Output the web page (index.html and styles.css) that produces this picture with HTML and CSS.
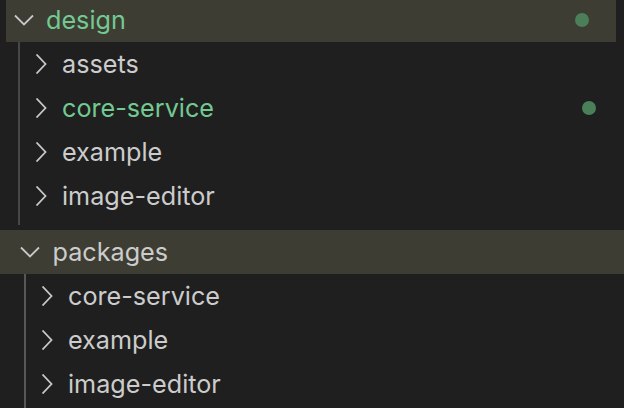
FILE: index.html
```html
<!DOCTYPE html>
<html>
<head>
<meta charset="utf-8">
<link rel="stylesheet" href="styles.css">
</head>
<body>
<div class="tree">
  <div class="folder first">
    <div class="row top selected">
      <svg class="chev" viewBox="0 0 20 20"><path d="M1 5.5 L10 14.5 L19 5.5"/></svg>
      <span class="label green">design</span>
      <span class="dot"></span>
    </div>
    <div class="children guide1">
      <div class="row child">
        <svg class="chev" viewBox="0 0 20 20"><path d="M5.5 0.5 L14.5 10 L5.5 19.5"/></svg>
        <span class="label">assets</span>
      </div>
      <div class="row child">
        <svg class="chev" viewBox="0 0 20 20"><path d="M5.5 0.5 L14.5 10 L5.5 19.5"/></svg>
        <span class="label green">core-service</span>
        <span class="dot"></span>
      </div>
      <div class="row child">
        <svg class="chev" viewBox="0 0 20 20"><path d="M5.5 0.5 L14.5 10 L5.5 19.5"/></svg>
        <span class="label">example</span>
      </div>
      <div class="row child">
        <svg class="chev" viewBox="0 0 20 20"><path d="M5.5 0.5 L14.5 10 L5.5 19.5"/></svg>
        <span class="label">image-editor</span>
      </div>
    </div>
  </div>
  <div class="folder second">
    <div class="row pk selected">
      <svg class="chev" viewBox="0 0 20 20"><path d="M1 5.5 L10 14.5 L19 5.5"/></svg>
      <span class="label">packages</span>
    </div>
    <div class="children guide2">
      <div class="row child">
        <svg class="chev" viewBox="0 0 20 20"><path d="M5.5 0.5 L14.5 10 L5.5 19.5"/></svg>
        <span class="label">core-service</span>
      </div>
      <div class="row child">
        <svg class="chev" viewBox="0 0 20 20"><path d="M5.5 0.5 L14.5 10 L5.5 19.5"/></svg>
        <span class="label">example</span>
      </div>
      <div class="row child">
        <svg class="chev" viewBox="0 0 20 20"><path d="M5.5 0.5 L14.5 10 L5.5 19.5"/></svg>
        <span class="label">image-editor</span>
      </div>
    </div>
  </div>
</div>
</body>
</html>
```
FILE: styles.css
```css
html, body {
  margin: 0;
  padding: 0;
  background: #1f1f1f;
  width: 624px;
  height: 408px;
  overflow: hidden;
}
.tree {
  font-family: Inter, "Noto Sans", sans-serif;
  font-size: 25.2px;
  color: #cccccc;
}
.row {
  height: 44px;
  display: flex;
  align-items: center;
  box-sizing: border-box;
}
.chev {
  width: 20px;
  height: 20px;
  flex: none;
  fill: none;
  stroke: #c8c8c8;
  stroke-width: 1.8;
}
.label {
  flex: 1;
  white-space: nowrap;
}
.green { color: #73c991; }
.dot {
  width: 14px;
  height: 14px;
  border-radius: 50%;
  background: #4a7f59;
  flex: none;
}
.selected { background: #3d3d33; }
.top {
  margin: -2px 8px 0 6px;
  padding-left: 8px;
  padding-right: 27px;
  gap: 12px;
}
.first .child {
  padding-left: 11px;
  padding-right: 28px;
  gap: 11px;
}
.guide1 {
  margin-left: 18px;
  border-left: 2px solid #474747;
  padding-bottom: 7px;
}
.second { margin-top: 5px; }
.pk {
  padding-left: 19.5px;
  gap: 13px;
}
.guide2 {
  margin-left: 24px;
  border-left: 2px solid #575757;
  padding-bottom: 10px;
}
.second .child {
  padding-left: 11px;
  gap: 11px;
}
```
